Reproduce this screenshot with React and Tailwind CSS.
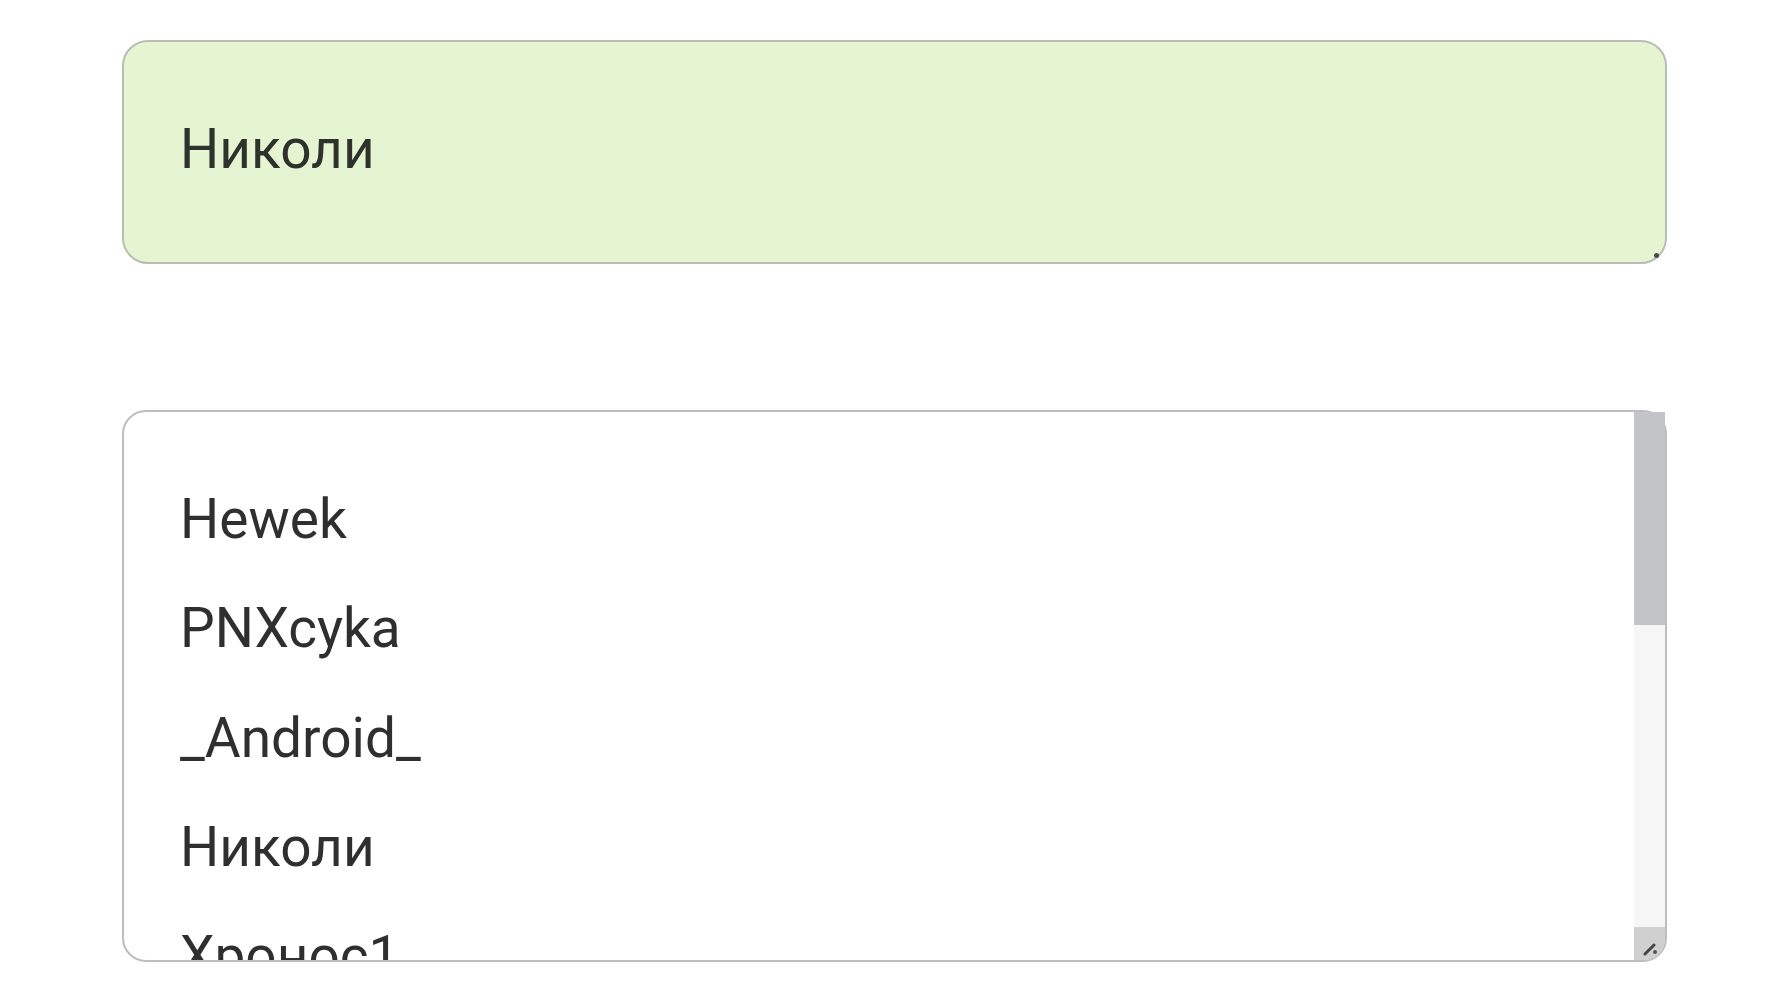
import React from 'react';

const names = ['Hewek', 'PNXcyka', '_Android_', 'Николи', 'Хронос1'];

const App = () => {
  return (
    <div className="min-h-[1000px] w-full bg-white pl-[122px] pt-[40px]" style={{ fontFamily: 'Roboto, "Noto Sans", sans-serif' }}>
      {/* Selected value */}
      <div className="relative h-[224px] w-[1545px] rounded-[26px] border-2 border-[#b9bdb5] bg-[#e6f5d1] pl-[56px] pt-[74px]">
        <div className="text-[55px] leading-[66px] text-[#2e322c]">Николи</div>
        <div className="absolute bottom-[4px] right-[6px] h-[5px] w-[5px] rounded-full bg-[#4a4a4a]"></div>
      </div>

      {/* Options list */}
      <div className="mt-[146px] flex h-[552px] w-[1545px] rounded-[24px] border-2 border-[#bdbdbd] bg-white">
        <div className="flex-1 overflow-hidden rounded-l-[22px] pl-[56px] pt-[53px]">
          {names.map((n) => (
            <div key={n} className="h-[109.3px] text-[55px] leading-[109.3px] text-[#2f2f2f]">
              {n}
            </div>
          ))}
        </div>
        <div className="flex w-[31px] flex-col">
          <div className="h-[213px] bg-[#c3c4c7]"></div>
          <div className="flex-1 bg-[#f6f6f6]"></div>
          <div className="flex h-[33px] items-end justify-end rounded-br-[20px] bg-[#d0d0d0] pb-[4px] pr-[6px]">
            <svg width="16" height="14" viewBox="0 0 16 14">
              <path d="M2 12 L11 3" stroke="#444" strokeWidth="3" strokeLinecap="round" />
              <circle cx="12" cy="10" r="2" fill="#555" />
            </svg>
          </div>
        </div>
      </div>
    </div>
  );
};

export default App;
